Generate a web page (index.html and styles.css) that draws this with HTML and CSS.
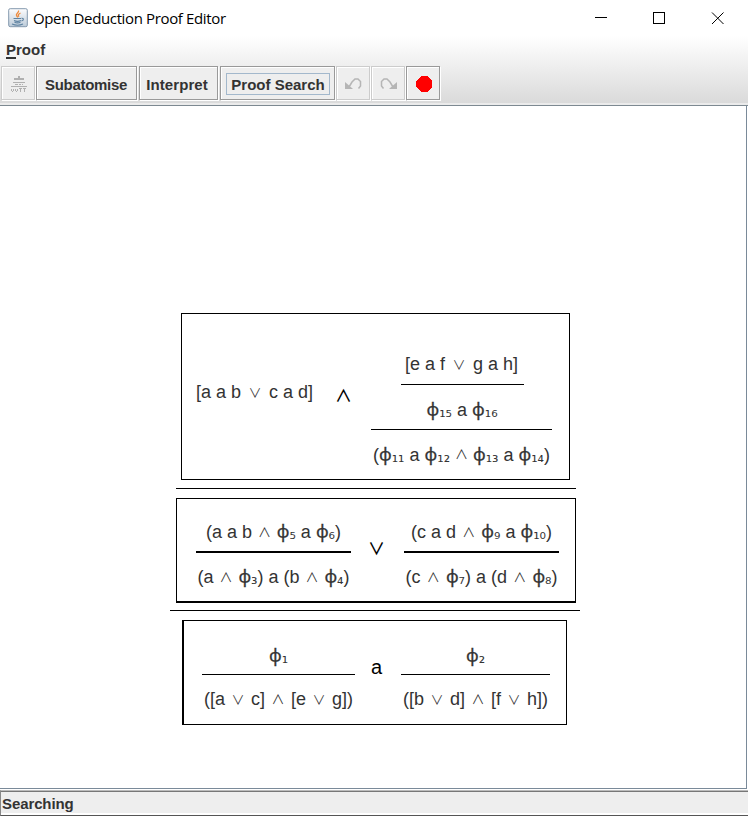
FILE: index.html
```html
<!DOCTYPE html>
<html lang="en">
<head>
<meta charset="utf-8">
<title>Open Deduction Proof Editor</title>
<link rel="stylesheet" href="styles.css">
</head>
<body>
<div class="window">
  <header class="titlebar">
    <svg class="app-icon" width="20" height="20" viewBox="0 0 20 20">
      <defs><linearGradient id="g" x1="0" y1="0" x2="0" y2="1"><stop offset="0" stop-color="#fdfdfe"/><stop offset="1" stop-color="#bccbd9"/></linearGradient></defs>
      <rect x=".7" y=".7" width="18.6" height="18" rx="1.5" fill="url(#g)" stroke="#8499ae"/>
      <path d="M10.5 2.5c1 2-3 3-2 5 .3.8 1 1.200 1.200 2M12.500 5c-2 1-3 2-1.500 3.700" fill="none" stroke="#ee8a3c" stroke-width="1.300"/>
      <path d="M5.500 10.500h7.500M6 12.500c2 1 5 1 7 0M6.500 14.300c2 .8 4 .8 6 0M4 16c3 1.300 8 1.300 11 0M13.500 10.300c2.500-.3 2.500 2.200 0 2.700" fill="none" stroke="#5f83a1" stroke-width="1.100"/>
    </svg>
    <span class="title">Open Deduction Proof Editor</span>
    <svg class="controls" width="130" height="14" viewBox="0 0 130 14" fill="none" stroke="#000" shape-rendering="crispEdges">
      <path d="M0 6.500h12M58.500 1.500h11v11h-11z"/>
      <path d="M117 1.500l11.500 11.500M128.500 1.500l-11.500 11.500" shape-rendering="auto"/>
    </svg>
  </header>
  <div class="chrome">
    <nav class="menubar"><span class="menu"><span class="mnemonic">P</span>roof</span></nav>
    <div class="toolbar">
      <button class="btn icon off"><svg width="16" height="16" viewBox="0 0 16 16" fill="#b0b0b0" shape-rendering="crispEdges"><path d="M7 0h2v3H7zM3 2h10v2H3zM2 6h12v1H2zM4 8h3v1H4zM8 8h2v1H8zM11 8h1v1h-1zM0 10h16v1H0zM0 13h1v2H0zM2 13h1v2H2zM1 15h1v1H1zM4 13h1v2H4zM6 13h1v2H6zM5 15h1v1H5zM8 12h3v1H8zM9 13h1v3H9zM12 12h3v1h-3zM13 13h1v3h-1z"/></svg></button>
      <button class="btn sub">Subatomise</button>
      <button class="btn interp">Interpret</button>
      <button class="btn search"><span class="focus">Proof Search</span></button>
      <button class="btn icon off"><svg width="17" height="12" viewBox="0 0 17 12" fill="none" stroke="#b5b5b5" stroke-width="1.500"><path d="M4 9l3-5 3-3h3l2.500 2.500V8L13.500 10.500"/><path d="M0 4v7h8z" fill="#b5b5b5" stroke="none"/></svg></button>
      <button class="btn icon off"><svg width="17" height="12" viewBox="0 0 17 12" fill="none" stroke="#b5b5b5" stroke-width="1.500"><path d="M13 9l-3-5-3-3H4L1.500 3.500V8L3.500 10.500"/><path d="M17 4v7H9z" fill="#b5b5b5" stroke="none"/></svg></button>
      <button class="btn icon"><svg width="16" height="16" viewBox="0 0 16 16" shape-rendering="crispEdges"><path d="M5 0h6l5 5v6l-5 5H5l-5-5V5z" fill="#f00"/></svg></button>
    </div>
  </div>
  <main class="canvas">
    <div class="proof">
      <section class="box box-top">
        <div class="formula w117"><span>[a a b</span><i>∨</i><span>c a d]</span></div>
        <div class="connective">∧</div>
        <div class="derivation w181">
          <div class="formula w113"><span>[e a f</span><i>∨</i><span>g a h]</span></div>
          <div class="rule w123"></div>
          <div class="formula w70 drop"><span><b>ϕ</b><sub>₁₅</sub> a <b>ϕ</b><sub>₁₆</sub></span></div>
          <div class="rule"></div>
          <div class="formula w177 drop"><span>(<b>ϕ</b><sub>₁₁</sub> a <b>ϕ</b><sub>₁₂</sub></span><i>∧</i><span><b>ϕ</b><sub>₁₃</sub> a <b>ϕ</b><sub>₁₄</sub>)</span></div>
        </div>
      </section>
      <div class="inference w400"></div>
      <section class="box box-mid">
        <div class="derivation w155">
          <div class="formula w135"><span>(a a b</span><i>∧</i><span><b>ϕ</b><sub>₅</sub> a <b>ϕ</b><sub>₆</sub>)</span></div>
          <div class="rule thick"></div>
          <div class="formula w152"><span>(a</span><i>∧</i><span><b>ϕ</b><sub>₃</sub>) a (b</span><i>∧</i><span><b>ϕ</b><sub>₄</sub>)</span></div>
        </div>
        <div class="connective">∨</div>
        <div class="derivation w155">
          <div class="formula w141"><span>(c a d</span><i>∧</i><span><b>ϕ</b><sub>₉</sub> a <b>ϕ</b><sub>₁₀</sub>)</span></div>
          <div class="rule thick"></div>
          <div class="formula w152"><span>(c</span><i>∧</i><span><b>ϕ</b><sub>₇</sub>) a (d</span><i>∧</i><span><b>ϕ</b><sub>₈</sub>)</span></div>
        </div>
      </section>
      <div class="inference w410"></div>
      <section class="box box-low">
        <div class="derivation w153">
          <div class="formula lone"><span><b>ϕ</b><sub>₁</sub></span></div>
          <div class="rule"></div>
          <div class="formula w149"><span>([a</span><i>∨</i><span>c]</span><i>∧</i><span>[e</span><i>∨</i><span>g])</span></div>
        </div>
        <div class="connective letter">a</div>
        <div class="derivation w149">
          <div class="formula lone"><span><b>ϕ</b><sub>₂</sub></span></div>
          <div class="rule"></div>
          <div class="formula w145"><span>([b</span><i>∨</i><span>d]</span><i>∧</i><span>[f</span><i>∨</i><span>h])</span></div>
        </div>
      </section>
    </div>
  </main>
  <footer class="status">Searching</footer>
</div>
</body>
</html>
```
FILE: styles.css
```css
* { box-sizing: border-box; }
body { margin: 0; background: #fff; font-family: "Liberation Sans", Arial, sans-serif; }
.window { width: 748px; height: 816px; display: flex; flex-direction: column; overflow: hidden; }
.titlebar { height: 36px; display: flex; align-items: center; padding: 0 23px 0 8px; }
.app-icon { margin-right: 5px; }
.title { font: 15px/20px "Open Sans", sans-serif; letter-spacing: -0.36px; white-space: nowrap; color: #000; }
.controls { margin-left: auto; }
.chrome { height: 70px; background: linear-gradient(#fff, #dadada 67px); border-bottom: 1px solid #7d8991; box-shadow: inset 0 -2px #ebebeb; }
.menubar { height: 30px; padding: 5px 6px; font-size: 15px; font-weight: bold; line-height: 18px; color: #333; }
.mnemonic { border-bottom: 2px solid #333; display: inline-block; height: 18px; }
.toolbar { display: flex; height: 34px; padding-left: 1px; }
.btn { height: 34px; margin: 0 1px 0 0; padding: 0; border: 1px solid #999; border-radius: 0; background: #eee; box-shadow: inset 1px 1px #fff, 1px 1px #fff; font: bold 15px/18px "Liberation Sans", Arial, sans-serif; letter-spacing: -0.3px; color: #333; display: flex; align-items: center; justify-content: center; padding-top: 4px; }
.icon { width: 34px; padding: 2px 0 0 1px; }
.off { border-color: #ccc; }
.sub { width: 101px; margin-right: 2px; padding-right: 1px; }
.interp { width: 79px; margin-right: 2px; padding-right: 3px; letter-spacing: 0.1px; }
.search { width: 115px; padding-top: 2px; padding-left: 1px; letter-spacing: 0; }
.focus { width: 104px; height: 22px; border: 1px solid #a3b8cc; line-height: 22px; }
.canvas { width: 747px; height: 683px; padding-top: 207px; border-right: 1px solid #7a8a99; border-bottom: 1px solid #7a8a99; }
.proof { width: 410px; margin-left: 170px; display: flex; flex-direction: column; align-items: center; }
.box { border: 1px solid #000; display: flex; color: #333; }
.box-top { width: 389px; height: 167px; padding: 32px 17px 0 14px; justify-content: space-between; margin-left: 1px; }
.box-top > .formula { margin-top: 28px; }
.box-top > .connective { margin-top: 31px; margin-left: 3px; }
.box-mid { width: 400px; height: 105px; border-bottom-width: 2px; padding: 15px 16px 0 19px; justify-content: space-between; margin-left: 2px; }
.box-low { width: 385px; height: 105px; border-left-width: 2px; padding: 17px 16px 0 18px; justify-content: space-between; margin-left: -1px; }
.derivation { display: flex; flex-direction: column; align-items: center; }
.rule { height: 1px; width: 100%; background: #000; margin: 7px 0; flex: none; }
.box-top .rule { position: relative; top: 1px; }
.box-top .rule.w123 { left: 1px; width: 123px; }
.thick { height: 2px; margin: 7px 0 6px; }
.box-low .rule { margin: 6px 0 6px; }
.inference { height: 1px; background: #000; margin: 8px 0 9px; }
.inference.w400 { margin-left: 2px; }
.inference.w410 { margin: 7px 0 9px; }
.formula { display: flex; justify-content: space-between; height: 30px; font-size: 18px; line-height: 36px; white-space: nowrap; }
.formula.drop { line-height: 38px; }
.formula.lone { line-height: 36px; padding-top: 1px; }
.box-low .formula.lone { line-height: 34px; }
.formula span { white-space: pre; }
.formula b { font: 17.5px/1 "Noto Sans", "DejaVu Sans", sans-serif; -webkit-text-stroke: 0.3px #333; }
.formula sub { font: 16px/1 "DejaVu Sans", sans-serif; vertical-align: -1px; }
.formula i { width: 12px; display: flex; justify-content: center; font: 350 13px/36px "Noto Sans CJK JP", sans-serif; }
.connective { width: 20px; display: flex; justify-content: center; font: 500 17px/36px "Noto Sans CJK JP", sans-serif; color: #000; margin-top: 16px; margin-left: -2px; }
.connective.letter { font: 20px/26px "Liberation Sans", Arial, sans-serif; margin-left: -3px; }
.w70 { width: 70px; }
.w113 { width: 113px; }
.w117 { width: 117px; }
.w123 { width: 123px; }
.w135 { width: 135px; }
.w141 { width: 141px; }
.w145 { width: 145px; }
.w149 { width: 149px; }
.w152 { width: 152px; }
.w153 { width: 153px; }
.w155 { width: 155px; }
.w177 { width: 177px; }
.w181 { width: 181px; }
.w400 { width: 400px; }
.w410 { width: 410px; }
.status { height: 26px; margin-top: 1px; border-top: 1px solid #bbb; border-left: 1px solid #888; border-bottom: 1px solid #555; box-shadow: inset 0 1px #777; background: linear-gradient(#eee 22px, #fff 22px); font-size: 15px; font-weight: bold; line-height: 26px; letter-spacing: -0.1px; padding-left: 1px; color: #333; }
```
